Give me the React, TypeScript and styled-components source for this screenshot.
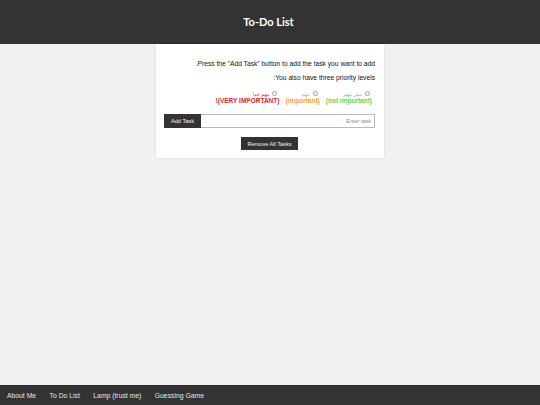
import React from "react";
import styled, { createGlobalStyle } from "styled-components";

const Global = createGlobalStyle`
  html, body { margin: 0; padding: 0; }
  body {
    background: #f1f1f1;
    font-family: "Liberation Sans", Arial, sans-serif;
  }
`;

const Page = styled.div`
  height: 405px;
  display: flex;
  flex-direction: column;
`;

const Header = styled.header`
  height: 44px;
  background: #333333;
  display: flex;
  align-items: center;
  justify-content: center;
  flex-shrink: 0;
`;

const Title = styled.h1`
  margin: 0;
  color: #ffffff;
  font-family: Lato, "Open Sans", sans-serif;
  font-weight: 700;
  font-size: 11px;
  padding-bottom: 2px;
  padding-right: 3px;
`;

const Main = styled.main`
  flex: 1;
  display: flex;
  justify-content: center;
  align-items: flex-start;
`;

const Card = styled.section`
  direction: rtl;
  width: 228px;
  box-sizing: border-box;
  background: #ffffff;
  padding: 16px 9px 8px 8px;
  box-shadow: 0 0 2px rgba(0, 0, 0, 0.12);
  font-size: 6.7px;
  color: #111;
`;

const Para = styled.p`
  margin: 0 0 6px 0;
  line-height: 8px;
`;

const Priorities = styled.div`
  display: flex;
  justify-content: flex-start;
  gap: 6px;
  margin-top: 8px;
  padding-right: 3px;
`;

const Priority = styled.label<{ $color: string }>`
  color: ${(p) => p.$color};
  display: flex;
  flex-direction: column;
  align-items: flex-start;
`;

const TopLine = styled.span`
  display: flex;
  align-items: center;
  gap: 3px;
  height: 7px;
`;

const Radio = styled.span`
  width: 5px;
  height: 5px;
  margin-right: 2px;
  box-sizing: border-box;
  border: 0.6px solid #9a9a9a;
  border-radius: 50%;
  background: #fff;
`;

const Arabic = styled.span`
  font-family: "Noto Sans", "DejaVu Sans", sans-serif;
  font-size: 5px;
`;

const English = styled.span`
  font-weight: 700;
  font-size: 6.5px;
  line-height: 8px;
`;

const InputRow = styled.div`
  display: flex;
  margin-top: 9px;
  height: 14px;
`;

const TaskInput = styled.div`
  flex: 1;
  border: 1px solid #b9b9b9;
  border-left: none;
  display: flex;
  align-items: center;
  padding: 0 3px;
  color: #8a8a8a;
  font-size: 5.5px;
`;

const DarkButton = styled.button`
  background: #333333;
  color: #f3f3f3;
  border: none;
  font-family: "Liberation Sans", Arial, sans-serif;
  font-size: 5.6px;
  padding: 0;
  cursor: pointer;
`;

const AddButton = styled(DarkButton)`
  width: 37px;
  height: 14px;
`;

const RemoveRow = styled.div`
  display: flex;
  justify-content: center;
  margin-top: 9px;
`;

const RemoveButton = styled(DarkButton)`
  width: 57px;
  height: 13px;
`;

const Footer = styled.footer`
  height: 20px;
  background: #333333;
  display: flex;
  align-items: center;
  gap: 13.5px;
  padding-left: 7px;
  flex-shrink: 0;
`;

const FooterLink = styled.a`
  color: #e6e6e6;
  font-size: 6.8px;
  text-decoration: none;
`;

const priorities = [
  { ar: "مش مهم", en: "(not important)", color: "#4fd96a" },
  { ar: "مهم", en: "(important)", color: "#f2a41f" },
  { ar: "مهم جدا", en: "(VERY IMPORTANT)!", color: "#e8202a" },
];

export default function App() {
  return (
    <Page>
      <Global />
      <Header>
        <Title>To-Do List</Title>
      </Header>
      <Main>
        <Card>
          <Para>Press the "Add Task" button to add the task you want to add.</Para>
          <Para>You also have three priority levels:</Para>
          <Priorities>
            {priorities.map((p) => (
              <Priority key={p.en} $color={p.color}>
                <TopLine>
                  <Radio />
                  <Arabic>{p.ar}</Arabic>
                </TopLine>
                <English>{p.en}</English>
              </Priority>
            ))}
          </Priorities>
          <InputRow>
            <TaskInput>Enter task</TaskInput>
            <AddButton>Add Task</AddButton>
          </InputRow>
          <RemoveRow>
            <RemoveButton>Remove All Tasks</RemoveButton>
          </RemoveRow>
        </Card>
      </Main>
      <Footer>
        <FooterLink>About Me</FooterLink>
        <FooterLink>To Do List</FooterLink>
        <FooterLink>Lamp (trust me)</FooterLink>
        <FooterLink>Guessing Game</FooterLink>
      </Footer>
    </Page>
  );
}
